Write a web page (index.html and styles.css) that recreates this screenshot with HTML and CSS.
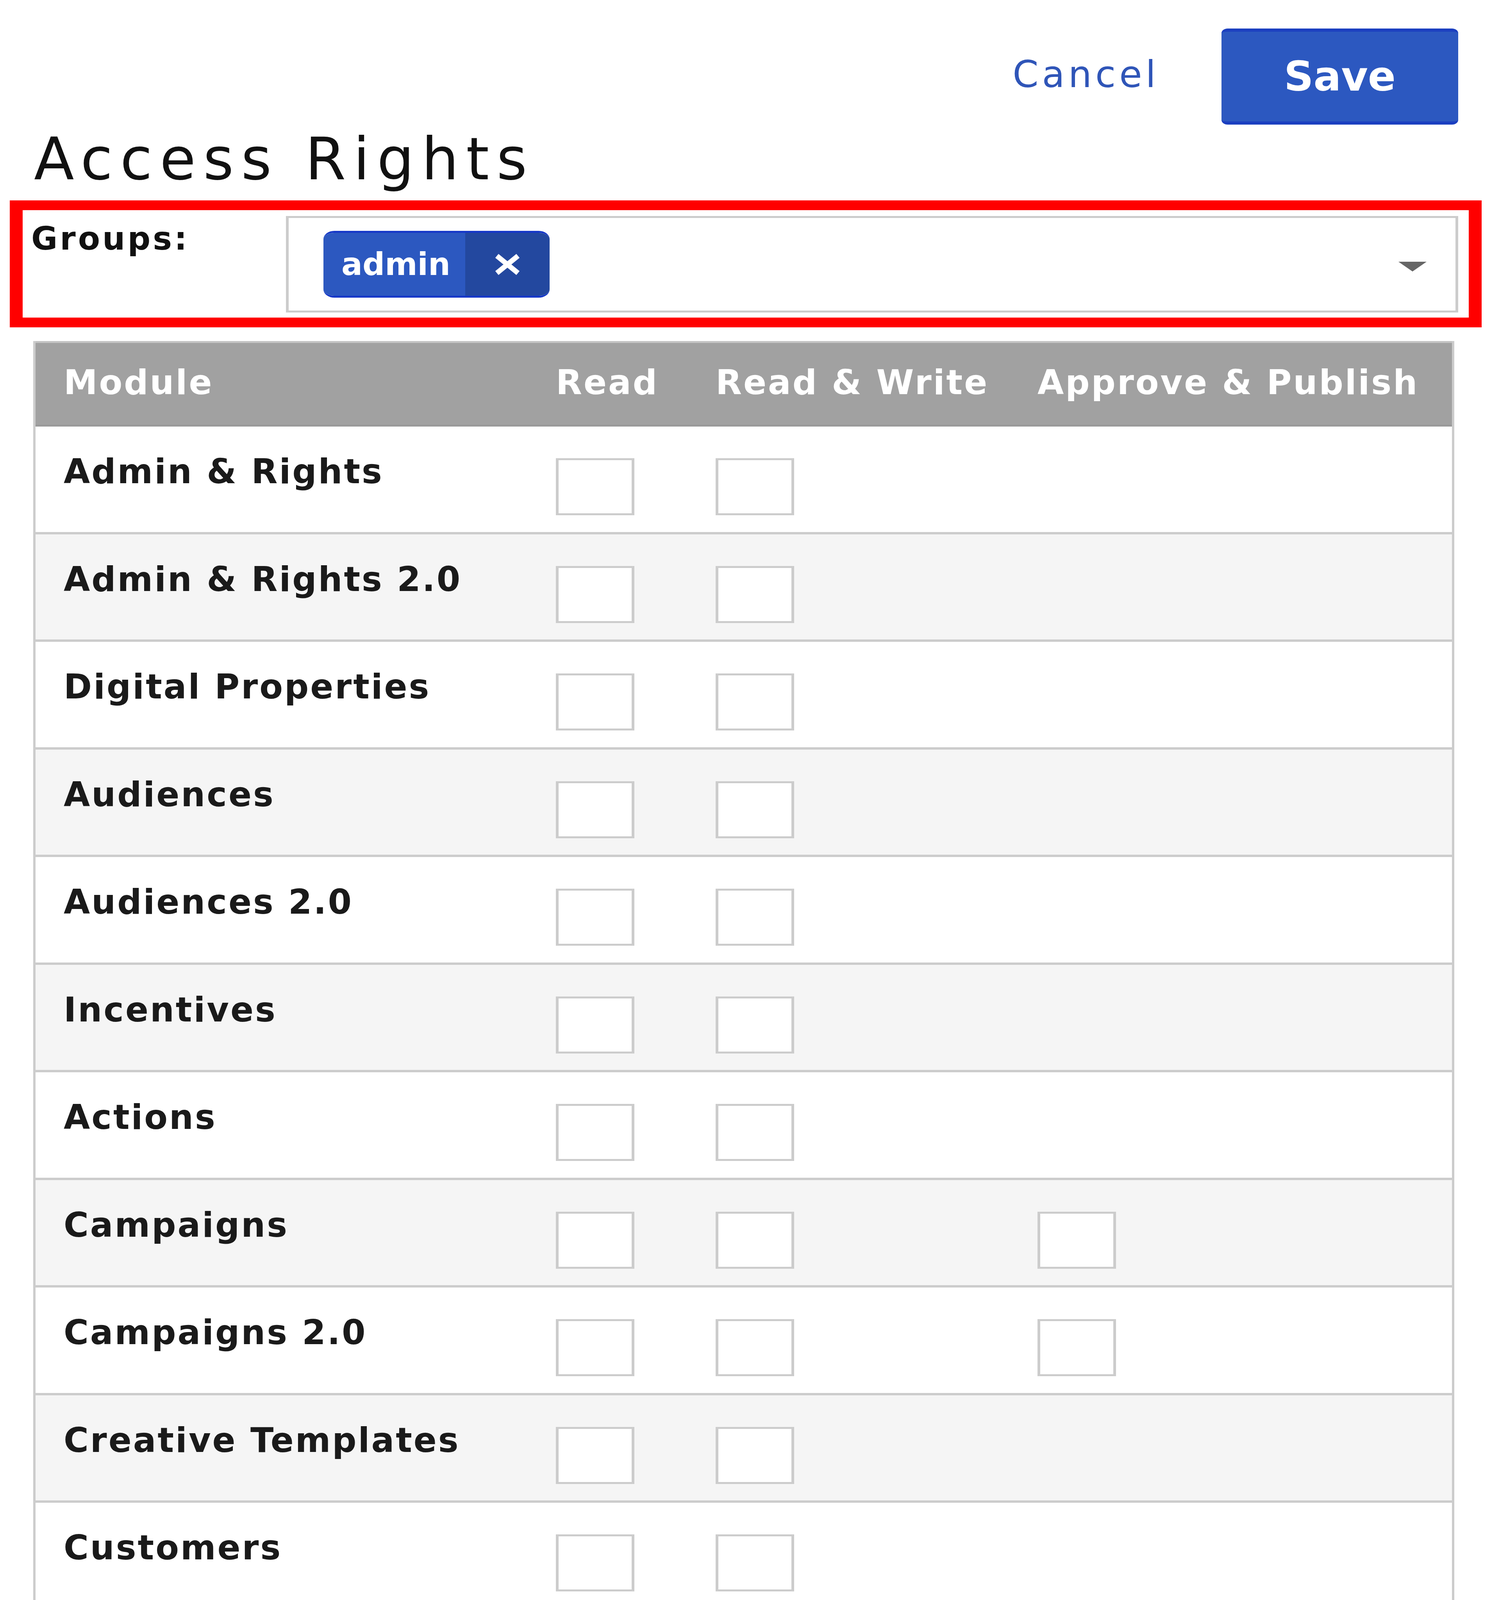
FILE: index.html
```html
<!DOCTYPE html>
<html lang="en">
<head>
    <meta charset="UTF-8">
    <meta name="viewport" content="width=device-width, initial-scale=1.0">
    <title>Access Rights</title>
    <link rel="stylesheet" href="styles.css">
</head>
<body>
    <div class="page">
        <div class="actions">
            <a class="cancel" href="#">Cancel</a>
            <button class="save">Save</button>
        </div>

        <h1>Access Rights</h1>

        <div class="groups-box">
            <label class="groups-label">Groups:</label>
            <div class="select">
                <span class="tag">
                    <span class="tag-text">admin</span>
                    <span class="tag-remove">
                        <svg width="72" height="56" viewBox="0 0 72 56">
                            <path d="M9 6 L63 50 M63 6 L9 50" stroke="#fff" stroke-width="13" fill="none"/>
                        </svg>
                    </span>
                </span>
                <span class="caret"></span>
            </div>
        </div>

        <div class="rights">
            <div class="rights-row rights-head">
                <div>Module</div>
                <div>Read</div>
                <div>Read &amp; Write</div>
                <div>Approve &amp; Publish</div>
            </div>
            <div class="rights-row">
                <div>Admin &amp; Rights</div>
                <div><span class="check"></span></div>
                <div><span class="check"></span></div>
                <div></div>
            </div>
            <div class="rights-row">
                <div>Admin &amp; Rights 2.0</div>
                <div><span class="check"></span></div>
                <div><span class="check"></span></div>
                <div></div>
            </div>
            <div class="rights-row">
                <div>Digital Properties</div>
                <div><span class="check"></span></div>
                <div><span class="check"></span></div>
                <div></div>
            </div>
            <div class="rights-row">
                <div>Audiences</div>
                <div><span class="check"></span></div>
                <div><span class="check"></span></div>
                <div></div>
            </div>
            <div class="rights-row">
                <div>Audiences 2.0</div>
                <div><span class="check"></span></div>
                <div><span class="check"></span></div>
                <div></div>
            </div>
            <div class="rights-row">
                <div>Incentives</div>
                <div><span class="check"></span></div>
                <div><span class="check"></span></div>
                <div></div>
            </div>
            <div class="rights-row">
                <div>Actions</div>
                <div><span class="check"></span></div>
                <div><span class="check"></span></div>
                <div></div>
            </div>
            <div class="rights-row">
                <div>Campaigns</div>
                <div><span class="check"></span></div>
                <div><span class="check"></span></div>
                <div><span class="check"></span></div>
            </div>
            <div class="rights-row">
                <div>Campaigns 2.0</div>
                <div><span class="check"></span></div>
                <div><span class="check"></span></div>
                <div><span class="check"></span></div>
            </div>
            <div class="rights-row">
                <div>Creative Templates</div>
                <div><span class="check"></span></div>
                <div><span class="check"></span></div>
                <div></div>
            </div>
            <div class="rights-row">
                <div>Customers</div>
                <div><span class="check"></span></div>
                <div><span class="check"></span></div>
                <div></div>
            </div>
        </div>
    </div>
</body>
</html>
```

FILE: styles.css
```css
* {
    box-sizing: border-box;
}
body {
    margin: 0;
    font-family: "DejaVu Sans", Verdana, sans-serif;
    background-color: #fff;
    color: #1a1a1a;
}
.page {
    height: 100vh;
    overflow: hidden;
}
.actions {
    display: flex;
    justify-content: flex-end;
    align-items: center;
    padding: 73px 107px 0 0;
}
.cancel {
    margin-right: 159px;
    margin-bottom: 12px;
    font-size: 95px;
    letter-spacing: 9px;
    color: #2f55b8;
    text-decoration: none;
}
.save {
    width: 606px;
    height: 246px;
    padding: 0;
    background-color: #2c58c0;
    color: #fff;
    border: none;
    border-top: 8px solid #1b3fc0;
    border-bottom: 8px solid #1b3fc0;
    border-radius: 16px / 12px;
    font-family: inherit;
    font-size: 105px;
    font-weight: bold;
    cursor: pointer;
}
h1 {
    margin: 1px 0 18px 87px;
    font-size: 150px;
    font-weight: normal;
    line-height: 175px;
    letter-spacing: 19px;
    color: #111;
}
.groups-box {
    display: flex;
    align-items: flex-start;
    margin: 0 47px 0 25px;
    padding: 15px 27px 13px 22px;
    border: solid #ff0000;
    border-width: 25px 33px;
}
.groups-label {
    width: 652px;
    margin-top: 10px;
    font-size: 82px;
    font-weight: bold;
    letter-spacing: 6px;
    color: #111;
}
.select {
    flex: 1;
    display: flex;
    align-items: center;
    height: 247px;
    padding: 0 74px 0 89px;
    border: solid #ccc;
    border-width: 5px 7px;
    background-color: #fff;
}
.tag {
    display: flex;
    height: 171px;
    border-radius: 28px / 21px;
    overflow: hidden;
    border-top: 5px solid #1638c8;
    border-bottom: 5px solid #1638c8;
}
.tag-text {
    display: flex;
    align-items: center;
    width: 363px;
    padding-left: 46px;
    background-color: #2c58c0;
    color: #fff;
    font-size: 80px;
    font-weight: bold;
}
.tag-remove {
    display: flex;
    align-items: center;
    justify-content: center;
    width: 216px;
    background-color: #23489f;
}
.caret {
    margin-left: auto;
    margin-top: 12px;
    border-left: 36px solid transparent;
    border-right: 36px solid transparent;
    border-top: 25px solid #666;
}
.rights {
    margin: 35px 117px 0 85px;
    border-left: 6px solid #ccc;
    border-right: 6px solid #ccc;
}
.rights-row {
    display: grid;
    grid-template-columns: 1260px 409px 824px 1fr;
    height: 275.5px;
    border-bottom: 6px solid #ccc;
    font-size: 87px;
    font-weight: bold;
    letter-spacing: 4px;
}
.rights-row > div {
    padding: 64px 0 0 72px;
}
.rights-row:nth-child(odd) {
    background-color: #f5f5f5;
}
.rights-head,
.rights-head:nth-child(odd) {
    height: 219px;
    background-color: #a1a1a1;
    border-top: 5px solid #c4c4c4;
    border-bottom: 5px solid #999;
    color: #fff;
}
.rights-head > div {
    padding-top: 50px;
}
.check {
    display: block;
    width: 201px;
    height: 146px;
    margin-top: 17px;
    border: solid #ccc;
    border-width: 5px 7px;
    background-color: #fff;
}
```
